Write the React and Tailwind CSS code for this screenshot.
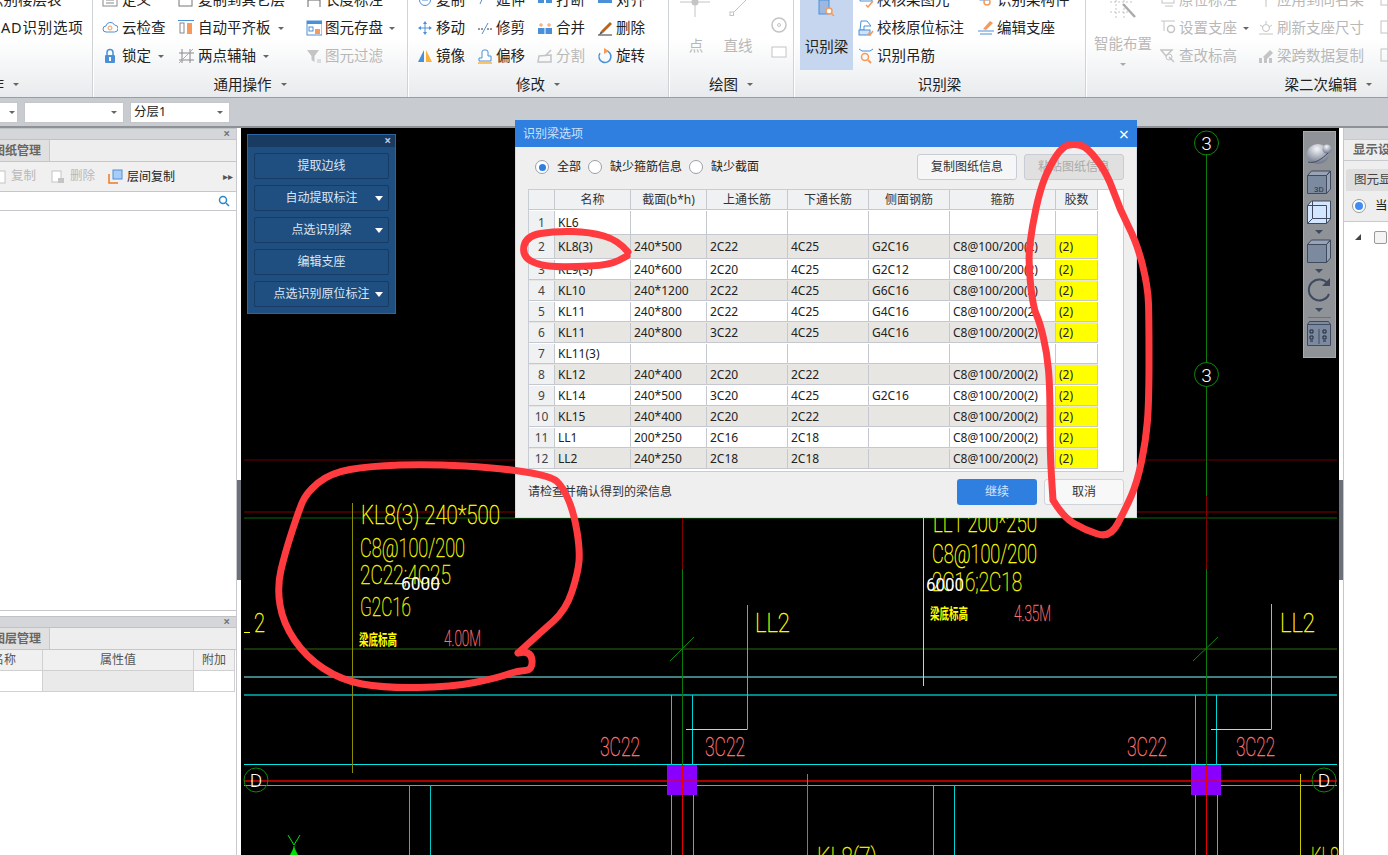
const ink = '#4a90d9';
const org = '#f59a5a';
const gry = '#c4c4c4';

const icons = {
  define: <><rect x="1" y="1" width="14" height="13" fill="#fff" stroke="#888" /><path d="M4 8h8M4 11h8" stroke="#888" /></>,
  copyLayer: <><rect x="1" y="1" width="13" height="13" fill="#fff" stroke="#777" /></>,
  length: <><path d="M2 1v14M14 1v14M2 8h12" stroke="#666" /></>,
  cloud: <><path d="M4 12a3 3 0 0 1 0-6 4.500 4.500 0 0 1 8.500-1 3.500 3.500 0 0 1 0 7z" fill="#fff" stroke={ink} /><circle cx="8" cy="8" r="2" fill="none" stroke={org} /></>,
  level: <><path d="M0 0.500h16" stroke={ink} /><rect x="2" y="3" width="4" height="10" fill="#fff" stroke="#888" /><rect x="9" y="3" width="5" height="11" fill={org} /></>,
  save: <><rect x="1" y="1" width="15" height="14" fill="#fff" stroke={ink} /><rect x="1" y="1" width="15" height="3" fill={ink} /><rect x="3" y="7" width="4" height="4" fill="#fff" stroke={ink} /><rect x="9" y="9" width="5" height="5" fill={org} /></>,
  lock: <><path d="M5 7V4.500a3 3 0 0 1 6 0V7" fill="none" stroke={ink} strokeWidth="1.500" /><rect x="3" y="7" width="10" height="8" rx="1" fill={ink} /><rect x="7" y="9" width="2" height="4" fill="#fff" /></>,
  axis: <><path d="M4 1v14M12 1v14M1 5h15M1 12h15" stroke="#888" /><path d="M1 15L15 1" stroke={org} /></>,
  filter: <><path d="M1 2h12L8.500 8v6l-3-2V8z" fill={gry} /><path d="M11 12h4M11 14h4" stroke={gry} /></>,
  copy: <><circle cx="8" cy="8" r="5.500" fill="#fff" stroke={ink} /><path d="M5 8h6" stroke={ink} /></>,
  move: <><path d="M8 1L6 4h4zM8 15l-2-3h4zM1 8l3-2v4zM15 8l-3-2v4z" fill={ink} /><path d="M8 4v8M4 8h8" stroke={ink} /></>,
  mirror: <><path d="M7 2v12H1z" fill={ink} /><path d="M9 2v12h6z" fill="#fbb03b" /></>,
  extend: <><path d="M3 12l4-9" stroke={ink} /><path d="M8 3v1M12 5l-1 1" stroke="#333" /></>,
  trim: <><path d="M1 9h5M10 9h5" stroke="#333" strokeDasharray="2 1" /><path d="M5 14L11 3" stroke={ink} /></>,
  offset: <><path d="M2 13v-3h3V4a2 2 0 0 1 2-2h2a2 2 0 0 1 2 2v4h3v5z" fill="#fff" stroke={ink} /><path d="M1 15h14" stroke="#fbb03b" strokeWidth="1.500" /></>,
  breakIt: <><rect x="1" y="3" width="6" height="8" fill={ink} /><rect x="9" y="3" width="6" height="8" fill={ink} /></>,
  merge: <><rect x="1" y="8" width="14" height="6" fill={ink} /><path d="M8 8v6" stroke="#fff" /><path d="M2 5h4M4 3v4M10 5h4M12 3v4" stroke={org} /></>,
  split: <><path d="M1 14l1-6 12-1v7zM8 8l6-6" fill="none" stroke={gry} strokeWidth="1.500" /></>,
  align: <><rect x="1" y="2" width="14" height="9" fill={ink} /></>,
  erase: <><path d="M4 11l9-9 2 2-9 9z" fill="#b5651d" /><path d="M4 11l2 2-4 2z" fill="#555" /><path d="M1 15h14" stroke="#333" /></>,
  rotate: <><path d="M8 2.500a6 6 0 1 1-5 2.600" fill="none" stroke={ink} strokeWidth="1.500" /><path d="M7 0l5 3-5 3z" fill={org} /></>,
  check: <><path d="M2 2h12v7H2z" fill="#fff" stroke={ink} /><path d="M8 13l2 2 5-6" fill="none" stroke={org} strokeWidth="1.500" /></>,
  checkNote: <><path d="M3 1h6l4 5H6v4H2z" fill="#fff" stroke={ink} /><rect x="1" y="10" width="11" height="5" fill="#cfe2f7" stroke={ink} /><path d="M10 13l2 2 3-4" fill="none" stroke={org} strokeWidth="1.500" /></>,
  hanger: <><path d="M1 1l3 2h8l3-2" fill="none" stroke={ink} /><circle cx="7" cy="9" r="3.500" fill="none" stroke={org} strokeWidth="1.500" /><path d="M10 12l3 3" stroke={org} strokeWidth="2" /></>,
  part: <><rect x="2" y="0" width="8" height="8" fill="#fff" stroke={ink} /><circle cx="9" cy="10" r="3" fill="none" stroke={org} strokeWidth="1.500" /></>,
  support: <><path d="M5 9l7-8 3 2-7 7z" fill={org} /><path d="M0 11h16M2 14h12" stroke={ink} /></>,
  note: <><rect x="2" y="2" width="12" height="9" fill="none" stroke={gry} /><path d="M5 14h8" stroke={gry} /></>,
  setSupport: <><path d="M1 1h14M4 1v10" stroke={gry} /><circle cx="11" cy="9" r="3.500" fill="none" stroke={gry} strokeWidth="1.500" /></>,
  refresh: <><circle cx="8" cy="8" r="3.500" fill="none" stroke={gry} /><path d="M8 1v3M2 5l3 2M14 5l-3 2M1 14h14" stroke={gry} /></>,
  level2: <><path d="M1 2h11L6 8zM9 9l5 5" fill="none" stroke={gry} strokeWidth="1.500" /><circle cx="9" cy="9" r="3" fill="none" stroke={gry} /></>,
  copySpan: <><path d="M1 15V10h3v5zM6 15V9h3v6zM11 15V10h3v5z" fill={gry} /><path d="M5 9l7-7 3 3-7 7z" fill={gry} /></>,
  sameName: <><path d="M2 4l6-3 6 3-6 4zM8 8v7" stroke={gry} fill={gry} /></>,
  blank: <rect x="1" y="1" width="12" height="12" fill="none" stroke={gry} />,
};

function Icon({ name, w = 16, h = 16 }) {
  return (
    <svg width={w} height={h} viewBox="0 0 16 16" className="shrink-0">
      {icons[name]}
    </svg>
  );
}

function Caret({ color = 'border-t-[#666]', className = 'ml-[6px]' }) {
  return <span className={`inline-block shrink-0 w-0 h-0 border-x-[3px] border-x-transparent border-t-[3px] ${color} ${className}`} />;
}

function Tool({ icon, label, caret, off, gap = 'gap-[4px]' }) {
  return (
    <div className={`h-[28px] flex items-center whitespace-nowrap ${gap} ${off ? 'text-[#b8b8b8]' : 'text-[#222]'}`}>
      <Icon name={icon} />
      <span>{label}</span>
      {caret && <Caret className="ml-[3px]" />}
    </div>
  );
}

function Col({ width, items, gap }) {
  return (
    <div className={width}>
      {items.map((it) => (
        <Tool key={it.label} {...it} gap={gap} />
      ))}
    </div>
  );
}

function Group({ width, label, caret = true, children, labelClass = 'justify-center' }) {
  return (
    <div className={`${width} shrink-0 h-full flex flex-col border-r border-r-[#d0d3d6] shadow-[1px_0_0_#fff]`}>
      <div className="h-[70px] flex overflow-visible">{children}</div>
      <div className={`h-[27px] pt-[2px] flex items-center text-[#222] whitespace-nowrap ${labelClass}`}>
        <span className="shrink-0">{label}</span>
        {caret && <Caret className="ml-[9px]" />}
      </div>
    </div>
  );
}

function Ribbon() {
  return (
    <div className="h-[98px] shrink-0 flex overflow-hidden border-b border-b-[#9a9da1] bg-gradient-to-b from-white from-40% to-[#e8ebed] text-[14.500px]">
      <Group width="w-[93px]" label="CAD操作" labelClass="justify-end pr-[73px]">
        <div className="-mt-[14px]">
          <div className="h-[28px] flex items-center -ml-[11px] whitespace-nowrap text-[#222]">识别楼层表</div>
          <div className="h-[28px] flex items-center -ml-[9px] tracking-[0.8px] whitespace-nowrap text-[#222]">CAD识别选项</div>
        </div>
      </Group>
      <Group width="w-[315px]" label="通用操作">
        <div className="-mt-[14px] pl-[9px] flex">
          <Col width="w-[76px]" items={[{ icon: 'define', label: '定义' }, { icon: 'cloud', label: '云检查' }, { icon: 'lock', label: '锁定', caret: true }]} />
          <Col width="w-[128px]" items={[{ icon: 'copyLayer', label: '复制到其它层' }, { icon: 'level', label: '自动平齐板', caret: true }, { icon: 'axis', label: '两点辅轴', caret: true }]} />
          <Col width="w-[95px]" gap="gap-[3px]" items={[{ icon: 'length', label: '长度标注' }, { icon: 'save', label: '图元存盘', caret: true }, { icon: 'filter', label: '图元过滤', off: true }]} />
        </div>
      </Group>
      <Group width="w-[261px]" label="修改">
        <div className="-mt-[14px] pl-[9px] flex">
          <Col width="w-[60px]" gap="gap-[3px]" items={[{ icon: 'copy', label: '复制' }, { icon: 'move', label: '移动' }, { icon: 'mirror', label: '镜像' }]} />
          <Col width="w-[60px]" gap="gap-[3px]" items={[{ icon: 'extend', label: '延伸' }, { icon: 'trim', label: '修剪' }, { icon: 'offset', label: '偏移' }]} />
          <Col width="w-[60px]" gap="gap-[3px]" items={[{ icon: 'breakIt', label: '打断' }, { icon: 'merge', label: '合并' }, { icon: 'split', label: '分割', off: true }]} />
          <Col width="w-[60px]" gap="gap-[3px]" items={[{ icon: 'align', label: '对齐' }, { icon: 'erase', label: '删除' }, { icon: 'rotate', label: '旋转' }]} />
        </div>
      </Group>
      <Group width="w-[125px]" label="绘图">
        <div className="flex pl-[5px] text-[#b8b8b8]">
          <div className="w-[44px] flex flex-col items-center">
            <svg width="30" height="17" viewBox="0 0 30 17" className="-ml-[2px]">
              <path d="M0 2h30M15 2v15" stroke={gry} />
              <circle cx="15" cy="2" r="3.500" fill={gry} />
            </svg>
            <span className="mt-[18px]">点</span>
          </div>
          <div className="w-[40px] flex flex-col items-center">
            <svg width="18" height="17" viewBox="0 0 18 17">
              <path d="M3 14L17 0" stroke={gry} />
              <rect x="1" y="12" width="3.500" height="3.500" fill="#fff" stroke={gry} />
            </svg>
            <span className="mt-[18px]">直线</span>
          </div>
          <div className="w-[20px] ml-[11px] flex flex-col items-center">
            <div className="h-[15px]" />
            <svg width="16" height="16" viewBox="0 0 16 16" className="mt-[2px]">
              <circle cx="8" cy="8" r="7" fill="none" stroke={gry} strokeWidth="1.500" />
              <circle cx="8" cy="8" r="1.500" fill="none" stroke={gry} />
            </svg>
            <svg width="16" height="12" viewBox="0 0 16 12" className="mt-[13px]">
              <rect x="1" y="1" width="14" height="10" fill="#fff" stroke={gry} />
            </svg>
          </div>
        </div>
      </Group>
      <Group width="w-[292px]" label="识别梁" caret={false}>
        <div className="w-[53px] ml-[6px] h-[70px] bg-[#c6d6ee] flex flex-col items-center text-[#222] shrink-0">
          <svg width="18" height="16" viewBox="0 0 18 16" className="mb-[20px]">
            <rect x="1" y="0" width="10" height="14" fill="#9db8e0" stroke={ink} />
            <circle cx="11" cy="11" r="3" fill="#fff" stroke={org} strokeWidth="1.500" />
            <path d="M13 13l3 3" stroke={org} strokeWidth="1.500" />
          </svg>
          <span>识别梁</span>
        </div>
        <div className="-mt-[14px] pl-[5px] flex">
          <Col width="w-[120px]" gap="gap-[3px]" items={[{ icon: 'check', label: '校核梁图元' }, { icon: 'checkNote', label: '校核原位标注' }, { icon: 'hanger', label: '识别吊筋' }]} />
          <Col width="w-[100px]" gap="gap-[3px]" items={[{ icon: 'part', label: '识别梁构件' }, { icon: 'support', label: '编辑支座' }]} />
        </div>
      </Group>
      <Group width="w-[302px]" label="梁二次编辑" labelClass="justify-end pr-[15px]">
        <div className="w-[74px] shrink-0 flex flex-col items-center text-[#b8b8b8]">
          <svg width="30" height="20" viewBox="0 0 30 20">
            <path d="M2 2h24M8 0v18M16 0v18M2 12h20" stroke={gry} strokeDasharray="2 2" />
            <path d="M15 4l12 13" stroke="#aaa" strokeWidth="2.500" />
          </svg>
          <span className="mt-[13px]">智能布置</span>
          <Caret color="border-t-[#aaa]" className="mt-[8px]" />
        </div>
        <div className="-mt-[14px] flex">
          <Col width="w-[98px]" gap="gap-[3px]" items={[{ icon: 'note', label: '原位标注', off: true }, { icon: 'setSupport', label: '设置支座', caret: true, off: true }, { icon: 'level2', label: '查改标高', off: true }]} />
          <Col width="w-[122px]" gap="gap-[3px]" items={[{ icon: 'sameName', label: '应用到同名梁', off: true }, { icon: 'refresh', label: '刷新支座尺寸', off: true }, { icon: 'copySpan', label: '梁跨数据复制', off: true }]} />
          <div className="w-[8px] overflow-hidden">
            {[0, 1, 2].map((i) => (
              <div key={i} className="h-[28px] flex items-center">
                <Icon name="blank" />
              </div>
            ))}
          </div>
        </div>
      </Group>
    </div>
  );
}

function SelectBox({ width, text }) {
  return (
    <div className={`${width} h-[21px] bg-white border border-[#c4c6ca] flex items-center justify-between pl-[3px] pr-[6px] text-[12.500px] text-[#222]`}>
      <span>{text}</span>
      <Caret />
    </div>
  );
}

function PanelHead() {
  return (
    <div className="h-[12px] bg-[#d4d6da] border-y border-y-[#c0c2c6] flex items-center justify-end pr-[6px]">
      <span className="text-[#777] text-[12px] leading-none font-bold">×</span>
    </div>
  );
}

function LeftPanel() {
  return (
    <div className="w-[237px] shrink-0 border-r border-r-[#c8cacd] bg-white flex flex-col text-[12px]">
      <PanelHead />
      <div className="h-[22px] bg-[#eeeeee] border-b border-b-[#c4c6ca]">
        <div className="w-[50px] h-full bg-[#e0e0e0] border-r border-r-[#c8c8c8] flex items-center justify-end pr-[8px] font-bold text-[#666] whitespace-nowrap overflow-hidden">
          <span className="shrink-0">图纸管理</span>
        </div>
      </div>
      <div className="h-[30px] bg-[#f0f0f0] border-b border-b-[#c4c6ca] flex items-center text-[#b8b8b8] relative">
        <svg width="8" height="14" viewBox="0 0 8 14"><rect x="-6" y="1" width="11" height="12" fill="#fff" stroke={gry} /></svg>
        <span className="ml-[3px] text-[12.500px]">复制</span>
        <svg width="14" height="14" viewBox="0 0 14 14" className="ml-[15px]"><rect x="1" y="1" width="9" height="11" fill="#fff" stroke={gry} /><rect x="7" y="8" width="6" height="5" fill={gry} /></svg>
        <span className="ml-[5px] text-[12.500px]">删除</span>
        <svg width="15" height="15" viewBox="0 0 15 15" className="ml-[13px]"><path d="M1 5v9h9" fill="none" stroke="#f07a22" strokeWidth="1.500" /><rect x="5" y="1" width="9" height="9" fill="#a9cdf7" stroke="#4a90d9" /></svg>
        <span className="ml-[4px] text-[12px] text-[#222]">层间复制</span>
        <span className="ml-auto mr-[3px] text-[10px] text-[#555]">▸▸</span>
      </div>
      <div className="h-[19px] border-b border-b-[#c4c6ca] flex items-center justify-end pr-[6px]">
        <svg width="12" height="12" viewBox="0 0 12 12"><circle cx="5" cy="5" r="3.500" fill="none" stroke="#2b87c8" strokeWidth="1.500" /><path d="M8 8l3 3" stroke="#2b87c8" strokeWidth="1.500" /></svg>
      </div>
      <div className="h-[400px] border-b border-b-[#c4c6ca]" />
      <div className="h-[5px]" />
      <PanelHead />
      <div className="h-[22px] bg-[#eeeeee] border-b border-b-[#c4c6ca]">
        <div className="w-[50px] h-full bg-[#e0e0e0] border-r border-r-[#c8c8c8] flex items-center justify-end pr-[8px] font-bold text-[#666] whitespace-nowrap overflow-hidden">
          <span className="shrink-0">图层管理</span>
        </div>
      </div>
      <div className="w-[235px] border-b border-r border-[#d0d0d0]">
        <div className="h-[21px] flex bg-[#f0f0f0] border-b border-b-[#d0d0d0] text-[#555]">
          <div className="w-[43px] border-r border-r-[#d0d0d0] flex items-center justify-end pr-[26px] shrink-0 overflow-hidden whitespace-nowrap"><span className="shrink-0">名称</span></div>
          <div className="w-[151px] border-r border-r-[#d0d0d0] flex items-center justify-center shrink-0">属性值</div>
          <div className="flex-1 flex items-center justify-center">附加</div>
        </div>
        <div className="h-[20px] flex">
          <div className="w-[43px] border-r border-r-[#d0d0d0] shrink-0" />
          <div className="w-[151px] border-r border-r-[#d0d0d0] bg-[#eaeaea] shrink-0" />
          <div className="flex-1" />
        </div>
      </div>
    </div>
  );
}

function Splitter({ width }) {
  return (
    <div className={`${width} shrink-0 bg-white`}>
      <div className="h-[352px]" />
      <div className="h-[100px] bg-[#6b7079]" />
    </div>
  );
}

function T({ x, y, w, size = 26, fill = '#ffff00', weight = 100, line = 0.4, children }) {
  return (
    <text x={x} y={y} textLength={w} lengthAdjust="spacingAndGlyphs" fontSize={size} fill={fill} stroke={fill} strokeWidth={line} fontWeight={weight} fontFamily="Roboto, 'Noto Sans CJK SC', sans-serif">
      {children}
    </text>
  );
}

const hLines = [
  [460, '#6b0000', 1],
  [512, '#800000', 1],
  [518, '#0a6a0a', 1],
  [649, '#2f6a10', 1],
  [677, '#80ffff', 1],
  [695, '#00b5b5', 1.500],
  [764.5, '#00e5e5', 1],
  [781, '#e60000', 1.500],
  [785.5, '#00d5d5', 1],
];

// [x, y1, y2, colour]
const vLines = [
  [352.5, 503, 773, '#8c8c00'],
  [409.5, 785, 855, '#00c8c8'],
  [430.5, 785, 855, '#00c8c8'],
  [682.5, 518, 569, '#800000'],
  [682.5, 569, 765, '#0a7a0a'],
  [682.5, 795, 855, '#e60000'],
  [671.5, 695, 765, '#00d5d5'],
  [692.5, 695, 765, '#00d5d5'],
  [671.5, 795, 855, '#00d5d5'],
  [693.5, 795, 855, '#00d5d5'],
  [747.5, 605, 729, '#a8a800'],
  [923.5, 518, 686, '#e8e800'],
  [807.5, 774, 855, '#8c8c00'],
  [933.5, 785, 855, '#00d5d5'],
  [954.5, 785, 855, '#00d5d5'],
  [1206.5, 154, 363, '#0a7a0a'],
  [1206.5, 386, 496, '#0a7a0a'],
  [1206.5, 496, 569, '#800000'],
  [1206.5, 569, 765, '#0a7a0a'],
  [1206.5, 795, 855, '#e60000'],
  [1195.5, 695, 765, '#00d5d5'],
  [1216.5, 695, 765, '#00d5d5'],
  [1195.5, 795, 855, '#00d5d5'],
  [1217.5, 795, 855, '#00d5d5'],
  [1271.5, 604, 729, '#c8c800'],
  [1300.5, 774, 855, '#c8c800'],
];

function Bubble({ x, y, label }) {
  return (
    <g>
      <circle cx={x} cy={y} r="12" fill="none" stroke="#0a8a0a" />
      <text x={x} y={y + 7} textAnchor="middle" fontSize="19" fill="#fff" fontFamily="Roboto, sans-serif" fontWeight="300">{label}</text>
    </g>
  );
}

function Drawing() {
  return (
    <svg width="1098" height="727" viewBox="241 128 1098 727" className="block">
      {hLines.map(([y, c, sw]) => (
        <path key={y} d={`M244 ${y}H1337`} stroke={c} strokeWidth={sw} />
      ))}
      {vLines.map(([x, a, b, c], i) => (
        <path key={i} d={`M${x} ${a}V${b}`} stroke={c} />
      ))}
      <path d="M686 729.500H747.500M1211 729.500H1271.500" stroke="#e8e800" />
      <path d="M670 661L694 637M1193 661L1218 637" stroke="#0a8a0a" />
      <rect x="667" y="765" width="30" height="30" fill="#8a00ff" />
      <rect x="1191" y="765" width="30" height="30" fill="#8a00ff" />
      <path d="M667 781H697M1191 781H1221" stroke="#e60000" />
      <path d="M682.500 765V795M1206.500 765V795" stroke="#e60000" />
      <Bubble x={1206.500} y={143} label="3" />
      <Bubble x={1206.500} y={374.500} label="3" />
      <Bubble x={256} y={780} label="D" />
      <Bubble x={1324} y={780} label="D" />
      <path d="M294 855v-9M288 835l6 10 6-10" fill="none" stroke="#00e000" />
      <path d="M290 855l4-8 4 8z" fill="#00e000" />

      <T x={361} y={524} w={139}>KL8(3) 240*500</T>
      <T x={360} y={557} w={105} fill="#f0f000">C8@100/200</T>
      <T x={360} y={584} w={91} fill="#f0f000">2C22;4C25</T>
      <T x={360} y={616} w={51} fill="#f0f000">G2C16</T>
      <T x={359} y={645} w={38} size={15} weight={700} line={0}>梁底标高</T>
      <T x={444} y={646} w={37} size={22} fill="#ff7272">4.00M</T>
      <T x={401} y={590} w={39} size={19} fill="#fff" weight={400} line={0}>6000</T>
      <path d="M244 632.500H250" stroke="#ffff00" />
      <T x={254} y={632} w={11}>2</T>
      <T x={933} y={532} w={104}>LL1 200*250</T>
      <T x={932} y={563} w={105}>C8@100/200</T>
      <T x={932} y={591} w={90} fill="#f0f000">2C16;2C18</T>
      <T x={926} y={591} w={38} size={19} fill="#fff" weight={400} line={0}>6000</T>
      <T x={930} y={619} w={38} size={15} weight={700} line={0}>梁底标高</T>
      <T x={1014} y={621} w={37} size={22} fill="#ff7272">4.35M</T>
      <T x={755} y={632} w={35}>LL2</T>
      <T x={1280} y={632} w={35}>LL2</T>
      <T x={600} y={756} w={40} fill="#ff7272">3C22</T>
      <T x={705} y={756} w={40} fill="#ff7272">3C22</T>
      <T x={1127} y={756} w={40} fill="#ff7272">3C22</T>
      <T x={1236} y={756} w={39} fill="#ff7272">3C22</T>
      <T x={817} y={866} w={60} fill="#f0f000">KL8(7)</T>
      <T x={1311} y={866} w={28} fill="#f0f000">KL8</T>
    </svg>
  );
}

function FloatBtn({ label, caret }) {
  return (
    <div className="h-[26px] rounded-[2px] bg-[#1f4e80] border border-[#173b63] flex items-center justify-center relative text-[12px] text-[#dbe6f2]">
      <span>{label}</span>
      {caret && <span className="absolute right-[5px] top-[10px] w-0 h-0 border-x-[4px] border-x-transparent border-t-[5px] border-t-white" />}
    </div>
  );
}

function FloatPanel() {
  return (
    <div className="absolute left-[6px] top-[6px] w-[149px] h-[180px] bg-[#1f4e80] border border-[#2c65a3]">
      <div className="h-[12px] bg-[#193b61] flex items-center justify-end pr-[4px]">
        <span className="text-[#b7cbe0] text-[12px] leading-none font-bold">×</span>
      </div>
      <div className="pt-[6px] px-[6px] flex flex-col gap-[6px]">
        <FloatBtn label="提取边线" />
        <FloatBtn label="自动提取标注" caret />
        <FloatBtn label="点选识别梁" caret />
        <FloatBtn label="编辑支座" />
        <FloatBtn label="点选识别原位标注" caret />
      </div>
    </div>
  );
}

function ViewBar() {
  return (
    <div className="absolute left-[1062px] top-[3px] w-[33px] h-[227px] bg-[#8f9296] border border-[#a8aaad]">
      <svg width="31" height="225" viewBox="1304 132 31 225" className="block">
        <defs>
          <radialGradient id="ball" cx="45%" cy="25%" r="80%">
            <stop offset="0" stopColor="#f4f6fa" />
            <stop offset="1" stopColor="#646d80" />
          </radialGradient>
        </defs>
        <ellipse cx="1318" cy="154" rx="11" ry="10" fill="url(#ball)" />
        <circle cx="1327" cy="149" r="4.500" fill="url(#ball)" />
        <path d="M1308 162c7 2 14-3 20-9" fill="none" stroke="#3f4a5e" />
        <g stroke="#3f4a5e" fill="#7c8aa0">
          <path d="M1307.500 175.500h19v18h-19z" />
          <path d="M1307.500 175.500l4-4.500h19l-4 4.500zM1326.500 175.500l4-4.500v18l-4 4.500z" fill="#98a4b6" />
        </g>
        <text x="1314" y="192" fontSize="8" fill="#2a3346" fontFamily="Roboto, sans-serif">3D</text>
        <g stroke="#3f4a5e" fill="#d3e6ff">
          <path d="M1307.500 205.500l4-4.500h19v18l-4 4.500h-19z" />
          <path d="M1312.500 201v17.500h18M1312.500 218.500l-5 5" fill="none" />
          <path d="M1307.500 205.500h19v18" fill="none" />
        </g>
        <path d="M1315 230h8l-4 4z" fill="#3f4a5e" />
        <g stroke="#3f4a5e" fill="#7c8aa0">
          <path d="M1307.500 244.500h19v18h-19z" />
          <path d="M1307.500 244.500l4-4.500h19l-4 4.500zM1326.500 244.500l4-4.500v18l-4 4.500z" fill="#98a4b6" />
        </g>
        <path d="M1315 269h8l-4 4z" fill="#3f4a5e" />
        <path d="M1328 284a10.500 10.500 0 1 0 1 10" fill="none" stroke="#3f4a5e" strokeWidth="2" />
        <path d="M1330 278v8h-8z" fill="#3f4a5e" />
        <path d="M1315 308h8l-4 4z" fill="#3f4a5e" />
        <path d="M1308 317.500h23" stroke="#6e7276" />
        <g stroke="#3f4a5e" fill="#7c8aa0">
          <path d="M1307.500 324.500l2-3h19l2 3v21h-23z" />
          <path d="M1307.500 324.500h23M1319 329v15" fill="none" />
        </g>
        <path d="M1310 330h3v3h-3zM1310 336h3v3h-3zM1323 330h3v3h-3zM1323 336h3v3h-3zM1310 341h3M1323 341h3" fill="none" stroke="#20283a" />
      </svg>
    </div>
  );
}

function RightPanel() {
  return (
    <div className="flex-1 min-w-0 bg-white text-[12.500px] overflow-hidden border-l border-l-[#c4c6ca]">
      <div className="h-[11px] bg-[#d4d6da]" />
      <div className="h-[22px] bg-[#eeeeee] border-y border-y-[#c8cacd] flex items-center pl-[9px] font-bold text-[#666] whitespace-nowrap">显示设置</div>
      <div className="h-[8px] bg-[#eeeeee]" />
      <div className="h-[22px] bg-[#eeeeee]">
        <div className="h-full ml-[2px] pl-[8px] bg-[#dedede] rounded-tl-[3px] flex items-center text-[#444] whitespace-nowrap">图元显示</div>
      </div>
      <div className="h-[31px] bg-[#eeeeee] border-b border-b-[#c8cacd] flex items-center pl-[8px] gap-[9px] whitespace-nowrap text-[#222]">
        <span className="w-[14px] h-[14px] shrink-0 rounded-full border border-[#999] bg-white flex items-center justify-center">
          <span className="w-[8px] h-[8px] rounded-full bg-[#3f8df2]" />
        </span>
        <span>当前楼层</span>
      </div>
      <div className="h-[30px] flex items-center pl-[11px] gap-[13px]">
        <span className="w-0 h-0 shrink-0 border-l-[6px] border-l-transparent border-b-[6px] border-b-[#444]" />
        <span className="w-[13px] h-[13px] shrink-0 rounded-[2px] border border-[#999] bg-[#f4f4f4]" />
      </div>
    </div>
  );
}

function Radio({ on, label }) {
  return (
    <div className="flex items-center gap-[8px]">
      <span className="w-[14px] h-[14px] rounded-full border border-[#9aa0a8] bg-white flex items-center justify-center">
        {on && <span className="w-[7px] h-[7px] rounded-full bg-[#2f7fe0]" />}
      </span>
      <span>{label}</span>
    </div>
  );
}

const colWidths = ['w-[26px]', 'w-[76px]', 'w-[76px]', 'w-[81px]', 'w-[81px]', 'w-[81px]', 'w-[106px]', 'w-[42px]'];
const headers = ['', '名称', '截面(b*h)', '上通长筋', '下通长筋', '侧面钢筋', '箍筋', '胶数'];
const C = 'C8@100/200(2)';
const rows = [
  ['KL6', '', '', '', '', '', ''],
  ['KL8(3)', '240*500', '2C22', '4C25', 'G2C16', C, '(2)'],
  ['KL9(3)', '240*600', '2C20', '4C25', 'G2C12', C, '(2)'],
  ['KL10', '240*1200', '2C22', '4C25', 'G6C16', C, '(2)'],
  ['KL11', '240*800', '2C22', '4C25', 'G4C16', C, '(2)'],
  ['KL11', '240*800', '3C22', '4C25', 'G4C16', C, '(2)'],
  ['KL11(3)', '', '', '', '', '', ''],
  ['KL12', '240*400', '2C20', '2C22', '', C, '(2)'],
  ['KL14', '240*500', '3C20', '4C25', 'G2C16', C, '(2)'],
  ['KL15', '240*400', '2C20', '2C22', '', C, '(2)'],
  ['LL1', '200*250', '2C16', '2C18', '', C, '(2)'],
  ['LL2', '240*250', '2C18', '2C18', '', C, '(2)'],
];

function BeamTable() {
  return (
    <div className="mx-[12px] mt-[9px] h-[283px] border border-[#c8ccd4] bg-white">
      <div className="h-[20px] flex bg-[#f0f1f3] w-[569px]">
        {headers.map((h, i) => (
          <div key={i} className={`${colWidths[i]} shrink-0 border-r border-r-[#c5c8cf] border-b border-b-[#c5c8cf] flex items-center justify-center text-[#333]`}>
            {h}
          </div>
        ))}
      </div>
      <div className="h-[1px]" />
      {rows.map((row, r) => (
        <div key={r} className={`${r < 2 ? 'h-[24px]' : 'h-[21px] pt-[1px]'} flex w-[569px] ${r % 2 === 1 ? 'bg-[#e7e6e3]' : 'bg-white'}`}>
          <div className={`${colWidths[0]} shrink-0 border-r border-b border-[#c5c8cf] bg-[#f0f1f3] flex items-center justify-center text-[#444]`}>{r + 1}</div>
          {row.map((v, i) => (
            <div
              key={i}
              className={`${colWidths[i + 1]} shrink-0 border-r border-b border-[#c5c8cf] flex items-center pl-[3px] whitespace-nowrap overflow-hidden text-[#222] ${i === 6 && v ? 'bg-[#ffff00]' : ''}`}
            >
              {v}
            </div>
          ))}
        </div>
      ))}
    </div>
  );
}

function Dialog() {
  return (
    <div className="absolute left-[515px] top-[120px] w-[622px] h-[398px] bg-[#efefef] border-x border-b border-[#d6dae2] text-[12px]">
      <div className="h-[27px] -mx-[1px] bg-[#2e7fe0] flex items-center justify-between pl-[8px] pr-[8px] text-[#cfe1f8]">
        <span>识别梁选项</span>
        <span className="text-white text-[18px] leading-none">×</span>
      </div>
      <div className="h-[26px] mt-[7px] flex items-center pl-[19px] pr-[12px] text-[#222]">
        <div className="flex items-center gap-[7px]">
          <Radio on label="全部" />
          <Radio label="缺少箍筋信息" />
          <Radio label="缺少截面" />
        </div>
        <div className="ml-auto flex gap-[7px] h-[26px]">
          <div className="w-[100px] rounded-[3px] border border-[#c8ccd6] bg-[#f6f6f6] flex items-center justify-center text-[#333]">复制图纸信息</div>
          <div className="w-[100px] rounded-[3px] border border-[#c8ccd6] bg-[#e0e0e0] flex items-center justify-center text-[#aaa]">粘贴图纸信息</div>
        </div>
      </div>
      <BeamTable />
      <div className="mt-[7px] h-[26px] flex items-center pl-[12px] pr-[12px] text-[#333]">
        <span>请检查并确认得到的梁信息</span>
        <div className="ml-auto flex gap-[7px] h-[26px]">
          <div className="w-[80px] rounded-[3px] bg-[#2e7fe0] flex items-center justify-center text-[#d5e6ff]">继续</div>
          <div className="w-[80px] rounded-[3px] border border-[#ced3dc] bg-[#f8f8f8] flex items-center justify-center text-[#333]">取消</div>
        </div>
      </div>
    </div>
  );
}

// smooth a hand drawn stroke through its points
function smooth(pts) {
  let d = `M${pts[0][0]} ${pts[0][1]}`;
  for (let i = 1; i < pts.length - 1; i++) {
    const mx = (pts[i][0] + pts[i + 1][0]) / 2;
    const my = (pts[i][1] + pts[i + 1][1]) / 2;
    d += `Q${pts[i][0]} ${pts[i][1]} ${mx} ${my}`;
  }
  const last = pts[pts.length - 1];
  return `${d}L${last[0]} ${last[1]}`;
}

const scribbles = [
  [[628, 252], [618, 240], [590, 232], [555, 231], [526, 236], [522, 256], [540, 266], [570, 267], [610, 265], [627, 256]],
  [[1053, 500], [1063, 517], [1085, 530], [1110, 538], [1125, 510], [1137, 483], [1146, 440], [1149, 400], [1149, 320], [1148, 287], [1137, 243], [1120, 210], [1107, 173], [1087, 147], [1075, 144], [1063, 146], [1050, 165], [1040, 190], [1032, 227], [1028, 260], [1033, 307], [1040, 323], [1047, 353], [1050, 387], [1050, 453], [1053, 500]],
  [[518, 653], [531, 650], [533, 670], [517, 671], [497, 678], [452, 687], [383, 688], [341, 680], [306, 657], [283, 623], [277, 587], [285, 553], [298, 513], [306, 493], [330, 473], [370, 466], [430, 464], [500, 468], [551, 476], [563, 487], [574, 513], [580, 550], [578, 573], [566, 610], [540, 633], [518, 653]],
];

function Scribbles() {
  return (
    <svg width="1388" height="855" viewBox="0 0 1388 855" className="absolute inset-0 pointer-events-none">
      {scribbles.map((pts, i) => (
        <path key={i} d={smooth(pts)} fill="none" stroke="#ff3b3f" strokeWidth="7" strokeLinecap="round" strokeLinejoin="round" />
      ))}
    </svg>
  );
}

export default function App() {
  return (
    <div className="relative w-[1388px] h-[855px] overflow-hidden flex flex-col bg-white font-['Noto_Sans','Noto_Sans_CJK_SC',sans-serif]">
      <Ribbon />
      <div className="h-[30px] shrink-0 bg-[#c8cbd0] border-b-2 border-b-[#8e9196] flex items-center gap-[6px] pt-[1px]">
        <SelectBox width="w-[18px] border-l-0" text="" />
        <SelectBox width="w-[100px]" text="" />
        <SelectBox width="w-[100px]" text="分层1" />
      </div>
      <div className="flex-1 flex min-h-0">
        <LeftPanel />
        <Splitter width="w-[4px]" />
        <div className="relative w-[1098px] shrink-0 bg-black overflow-hidden">
          <Drawing />
          <FloatPanel />
          <ViewBar />
        </div>
        <Splitter width="w-[4px]" />
        <RightPanel />
      </div>
      <Dialog />
      <Scribbles />
    </div>
  );
}
